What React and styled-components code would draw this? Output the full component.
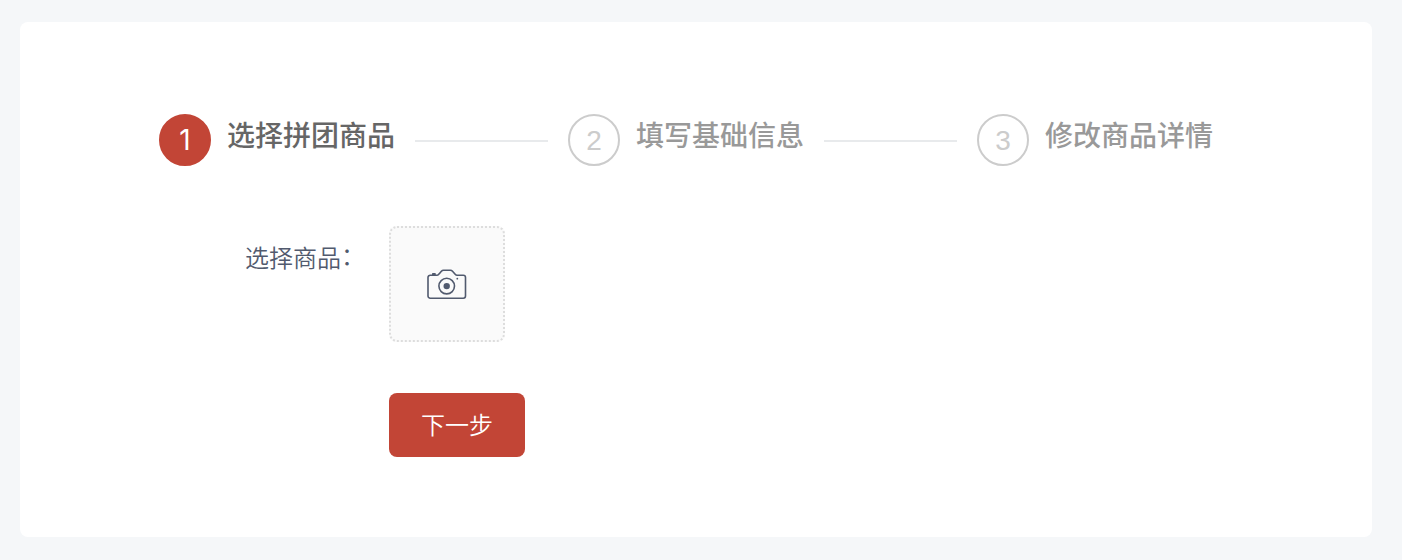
import React, { useState } from 'react';
import styled, { createGlobalStyle } from 'styled-components';

const GlobalStyle = createGlobalStyle`
  * {
    box-sizing: border-box;
  }

  body {
    margin: 0;
    background: #f5f7f9;
    font-family: 'Liberation Sans', 'Noto Sans CJK SC', sans-serif;
    color: #515a6e;
  }
`;

const Page = styled.div`
  height: 560px;
  padding: 22px 30px 23px 20px;
`;

const Card = styled.div`
  height: 515px;
  padding: 92px 139px 0;
  background: #fff;
  border-radius: 8px;
`;

const Steps = styled.div`
  display: flex;
`;

const Step = styled.div`
  display: flex;
  align-items: flex-start;
  flex: none;
  width: ${({ $last }) => ($last ? 'auto' : '409px')};
`;

const StepNumber = styled.div`
  flex: none;
  width: 52px;
  height: 52px;
  margin-right: 16px;
  border: 2px solid ${({ $active }) => ($active ? '#c24536' : '#ccc')};
  border-radius: 50%;
  background: ${({ $active }) => ($active ? '#c24536' : '#fff')};
  color: ${({ $active }) => ($active ? '#fff' : '#ccc')};
  font-family: ${({ $active }) => ($active ? 'Inter' : "'Liberation Sans'")}, sans-serif;
  font-size: 28px;
  line-height: ${({ $active }) => ($active ? 49 : 50)}px;
  text-align: center;
`;

const StepTitle = styled.div`
  flex: none;
  font-size: 28px;
  font-family: 'Noto Sans CJK SC', sans-serif;
  font-weight: 500;
  line-height: 40px;
  color: ${({ $active }) => ($active ? '#666' : '#999')};
`;

const StepLine = styled.div`
  flex: 1;
  height: 2px;
  margin: 26px 20px 0;
  background: #e8eaec;
`;

const FormRow = styled.div`
  display: flex;
  margin-top: ${({ $gap }) => $gap}px;
`;

const Label = styled.label`
  width: 230px;
  padding: 17px 24px 0 0;
  font-family: 'Noto Sans CJK SC', sans-serif;
  font-size: 24px;
  font-weight: 350;
  line-height: 24px;
  text-align: right;
`;

const Colon = styled.span`
  vertical-align: 2px;
  line-height: 1;
`;

const Picker = styled.button`
  display: flex;
  align-items: center;
  justify-content: center;
  width: 116px;
  height: 116px;
  padding: 0;
  border: 2px dotted #ddd;
  border-radius: 8px;
  background: #fafafa;
  color: #515a6e;
`;

const NextButton = styled.button`
  width: 136px;
  height: 64px;
  margin-left: 230px;
  padding: 0 0 2px;
  border: 0;
  border-radius: 8px;
  background: #c24536;
  color: #fff;
  font-family: 'Noto Sans CJK SC', sans-serif;
  font-size: 24px;
  font-weight: 350;
  line-height: 36px;
`;

const CameraIcon = () => (
  <svg width="40" height="32" viewBox="0 0 40 32" fill="none" stroke="currentColor" strokeWidth="1.6">
    <path d="M3.2 7.2H10.2C11.2 7.2 11.8 6.4 12.5 5.5L14.4 3.2C15 2.5 15.6 2.2 16.5 2.2H23.4C24.3 2.2 24.9 2.5 25.5 3.2L28.4 6.5C28.9 7.1 29.4 7.2 30 7.2H36.3A2.2 2.2 0 0 1 38.5 9.4V28A2.2 2.2 0 0 1 36.3 30.2H3.2A2.2 2.2 0 0 1 1 28V9.4A2.2 2.2 0 0 1 3.2 7.2Z" />
    <circle cx="19.7" cy="18.1" r="7.8" />
    <circle cx="19.7" cy="18.1" r="3.2" fill="currentColor" stroke="none" />
    <circle cx="30.3" cy="10.7" r="0.9" fill="currentColor" stroke="none" />
    <path d="M5 7.2V6.1C5 5.3 5.4 5 6.1 5H7.7C8.4 5 8.8 5.3 8.8 6.1V7.2Z" fill="currentColor" stroke="none" />
  </svg>
);

const steps = ['选择拼团商品', '填写基础信息', '修改商品详情'];

const App = () => {
  const [current] = useState(0);

  return (
    <>
      <GlobalStyle />
      <Page>
        <Card>
          <Steps>
            {steps.map((title, index) => {
              const last = index === steps.length - 1;
              return (
                <Step key={title} $last={last}>
                  <StepNumber $active={index === current}>{index + 1}</StepNumber>
                  <StepTitle $active={index === current}>{title}</StepTitle>
                  {!last && <StepLine />}
                </Step>
              );
            })}
          </Steps>
          <FormRow $gap={60}>
            <Label>
              选择商品<Colon>：</Colon>
            </Label>
            <Picker type="button" aria-label="选择商品">
              <CameraIcon />
            </Picker>
          </FormRow>
          <FormRow $gap={51}>
            <NextButton type="button">下一步</NextButton>
          </FormRow>
        </Card>
      </Page>
    </>
  );
};

export default App;
